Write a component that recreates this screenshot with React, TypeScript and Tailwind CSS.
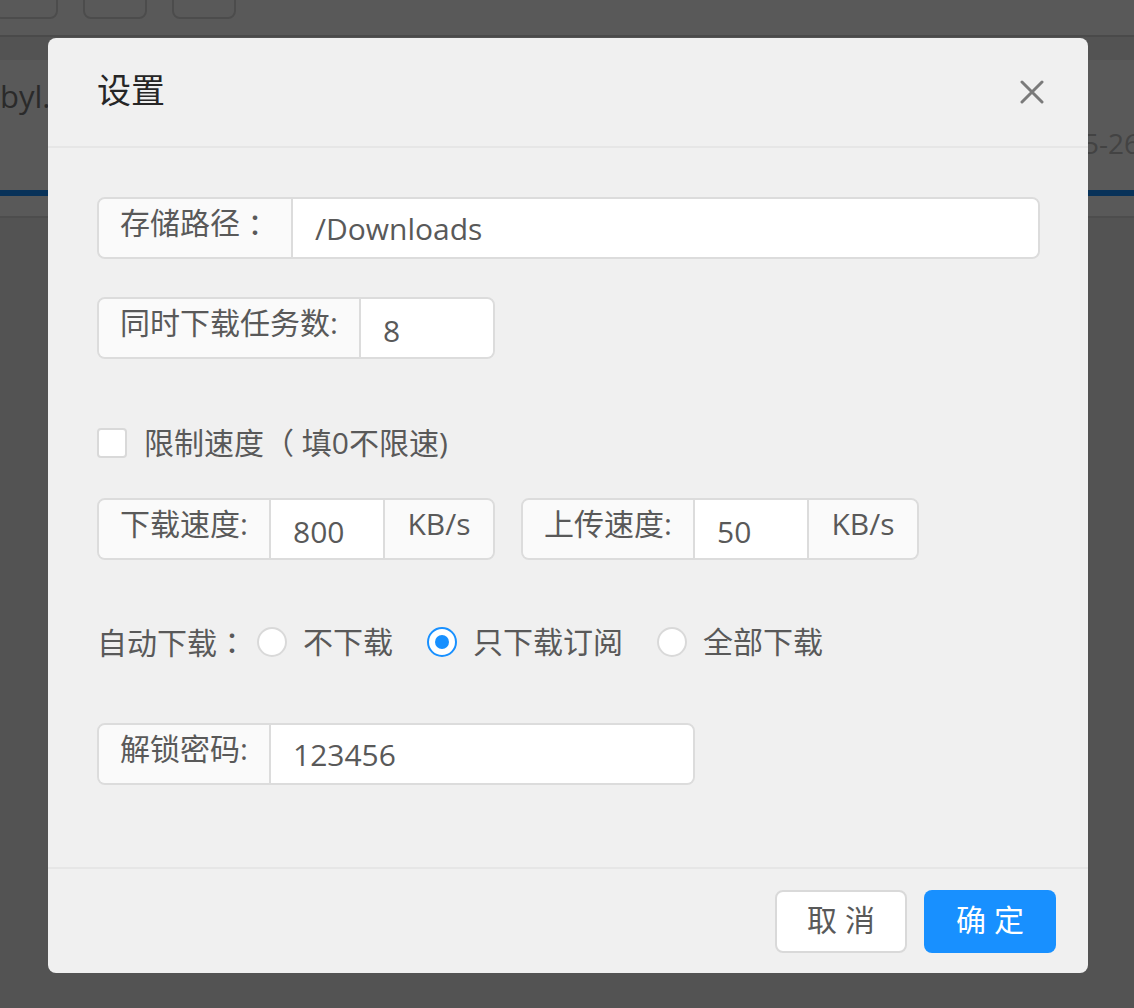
import { useState } from 'react'

// 全角冒号（居中样式）
const Colon = () => <span className="font-['Noto_Sans_CJK_TC',sans-serif]">：</span>

// 单选项
const Radio = ({ checked, label, className }: { checked?: boolean; label: string; className?: string }) => (
  <div className={`flex items-center ${className ?? ''}`}>
    <span
      className={`w-[30px] h-[30px] rounded-full border-2 bg-white flex items-center justify-center ${
        checked ? 'border-[#1890ff]' : 'border-[#d9d9d9]'
      }`}
    >
      {checked && <span className="w-[14px] h-[14px] rounded-full bg-[#1890ff]" />}
    </span>
    <span className="ml-[16px] text-[30px] leading-[40px] text-[#595959]">{label}</span>
  </div>
)

// 带标签的输入框组
const Group = ({
  label,
  value,
  addon,
  className,
  labelClass,
  inputClass,
}: {
  label: React.ReactNode
  value: string
  addon?: string
  className: string
  labelClass: string
  inputClass: string
}) => (
  <div className={`flex h-[62px] border-2 border-[#dcdcdc] rounded-[8px] overflow-hidden ${className}`}>
    <div className={`bg-[#fafafa] border-r-2 border-[#dcdcdc] flex items-center justify-center pb-[10px] text-[30px] leading-[40px] text-[#595959] whitespace-nowrap ${labelClass}`}>
      {label}
    </div>
    <div className={`bg-white flex items-center pl-[22px] pt-[2px] text-[30px] leading-[40px] text-[#595959] ${inputClass}`}>
      {value}
    </div>
    {addon && (
      <div className="flex-1 bg-[#fafafa] border-l-2 border-[#dcdcdc] flex items-center justify-center pb-[10px] text-[30px] leading-[40px] text-[#595959]">
        {addon}
      </div>
    )}
  </div>
)

const App = () => {
  const [limit] = useState(false)

  return (
    <div className="relative w-[1134px] h-[1008px] overflow-hidden bg-[#ededed] font-['Open_Sans','Noto_Sans_CJK_SC',sans-serif]">
      {/* 背后的页面 */}
      <div className="h-[37px] bg-white border-b-2 border-[#d5d5d5] flex gap-[25px]">
        <div className="-ml-[6px] -mt-[10px] w-[64px] h-[29px] rounded-[8px] border-2 border-[#d9d9d9] bg-white" />
        <div className="-mt-[10px] w-[64px] h-[29px] rounded-[8px] border-2 border-[#d9d9d9] bg-white" />
        <div className="-mt-[10px] w-[64px] h-[29px] rounded-[8px] border-2 border-[#d9d9d9] bg-white" />
      </div>
      <div className="mt-[23px] h-[158px] bg-white border-b-2 border-[#dcdcdc] flex flex-col">
        <div className="pt-[16px] text-[31px] leading-[40px] text-[#7a7a7a] whitespace-nowrap">byl.</div>
        <div className="pl-[994px] mt-[9px] text-[28px] leading-[36px] text-[#c0c0c0] whitespace-nowrap">2020-05-26</div>
        <div className="mt-[29px] h-[6px] bg-[#1890ff]" />
      </div>

      {/* 遮罩与弹窗 */}
      <div className="absolute inset-0 bg-black/65">
        <div className="ml-[48px] mt-[38px] w-[1040px] h-[935px] bg-[#f0f0f0] rounded-[8px] flex flex-col">
          <div className="h-[110px] border-b-2 border-[#e6e6e6] flex items-center justify-between pl-[49px] pr-[44px]">
            <span className="-mt-[4px] text-[34px] leading-[44px] text-[#262626]">设置</span>
            <svg width="24" height="24" viewBox="0 0 24 24" className="text-[#7a7a7a]">
              <path d="M2 2L22 22M22 2L2 22" stroke="currentColor" strokeWidth="3" strokeLinecap="round" />
            </svg>
          </div>

          <div className="flex-1 flex flex-col pl-[49px] pt-[49px]">
            <Group
              label={<>存储路径<Colon /></>}
              value="/Downloads"
              className="w-[943px]"
              labelClass="w-[194px]"
              inputClass="flex-1"
            />
            <Group label="同时下载任务数:" value="8" className="mt-[38px] w-[398px]" labelClass="w-[262px]" inputClass="flex-1 pt-[6px]" />

            <div className="mt-[69px] h-[30px] flex items-center">
              <span className={`w-[30px] h-[30px] rounded-[4px] border-2 bg-white ${limit ? 'border-[#1890ff]' : 'border-[#d9d9d9]'}`} />
              <span className="ml-[17px] text-[30px] leading-[40px] text-[#595959] whitespace-nowrap">限制速度（ 填0不限速)</span>
            </div>

            <div className="mt-[40px] flex gap-[26px]">
              <Group label="下载速度:" value="800" addon="KB/s" className="w-[398px]" labelClass="w-[172px]" inputClass="w-[112px] pt-[6px]" />
              <Group label="上传速度:" value="50" addon="KB/s" className="w-[398px]" labelClass="w-[172px]" inputClass="w-[112px] pt-[6px]" />
            </div>

            <div className="mt-[67px] h-[30px] flex items-center">
              <span className="text-[30px] leading-[40px] text-[#595959] whitespace-nowrap">
                自动下载<Colon />
              </span>
              <Radio label="不下载" className="ml-[10px]" />
              <Radio label="只下载订阅" checked className="ml-[34px]" />
              <Radio label="全部下载" className="ml-[34px]" />
            </div>

            <Group label="解锁密码:" value="123456" className="mt-[66px] w-[598px]" labelClass="w-[172px]" inputClass="flex-1" />
          </div>

          <div className="h-[106px] border-t-2 border-[#e6e6e6] flex items-center justify-end gap-[17px] pr-[32px]">
            <button className="w-[132px] h-[63px] rounded-[8px] bg-white border-2 border-[#d9d9d9] pb-[3px] text-[30px] text-[#595959]">取 消</button>
            <button className="w-[132px] h-[63px] rounded-[8px] bg-[#1890ff] pb-[3px] text-[30px] text-white">确 定</button>
          </div>
        </div>
      </div>
    </div>
  )
}

export default App
